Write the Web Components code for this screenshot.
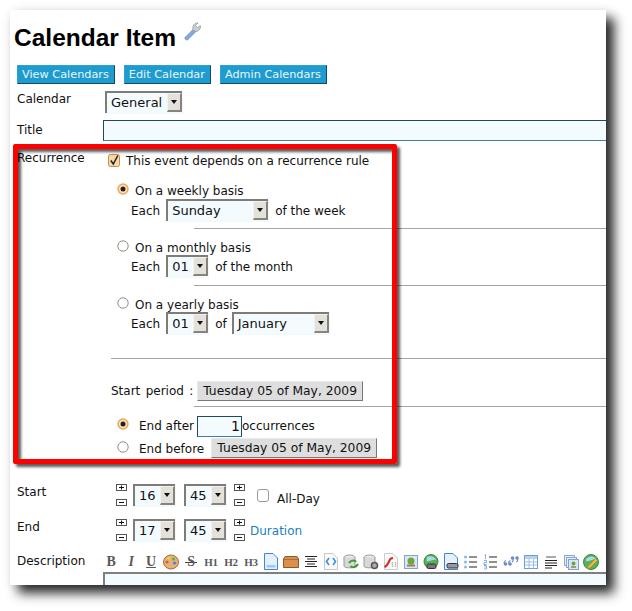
<!DOCTYPE html>
<html>
<head>
<meta charset="utf-8">
<title>Calendar Item</title>
<style>
  html, body { margin: 0; padding: 0; background: #fff; }
  body { width: 632px; height: 611px; overflow: hidden; font: 12px "DejaVu Sans", sans-serif; color: #111; }
  cal-row.calendar { margin-top: 7px; }
  cal-row.title { margin-top: 6px; --label-top: 3px; }
  cal-row.recurrence { margin-top: 10px; --label-top: 0; }
  cal-row.start { margin-top: 26px; }
  cal-row.end { margin-top: 12px; }
  cal-row.description { margin-top: 10px; --label-top: 2px; }
  .line { display: flex; align-items: center; white-space: nowrap; }
  .each { margin-left: 28px; }
  cal-option { margin-left: 14px; }
  cal-option.end-opt { --label-gap: 10px; }
</style>
</head>
<body>
<cal-sheet>
  <cal-heading>Calendar Item</cal-heading>
  <cal-nav>
    <cal-btn>View Calendars</cal-btn>
    <cal-btn>Edit Calendar</cal-btn>
    <cal-btn>Admin Calendars</cal-btn>
  </cal-nav>

  <cal-row class="calendar" label="Calendar">
    <cal-select value="General" width="78" style="margin-left:2px"></cal-select>
  </cal-row>
  <cal-row class="title" label="Title"><cal-input width="520"></cal-input></cal-row>

  <cal-row class="recurrence" label="Recurrence">
    <div class="line" style="height:18px;margin-left:5px">
      <cal-check checked style="margin-right:6px"></cal-check><span style="padding-top:2px">This event depends on a recurrence rule</span>
    </div>

    <cal-option checked style="margin-top:12px;height:18px">On a weekly basis</cal-option>
    <div class="line each">Each <cal-select value="Sunday" width="103" style="margin:0 6px 0 6px"></cal-select> of the week</div>
    <cal-rule inset="91" style="margin-top:6px"></cal-rule>

    <cal-option style="margin-top:9px;height:17px">On a monthly basis</cal-option>
    <div class="line each">Each <cal-select value="01" width="43" style="margin:0 6px 0 6px"></cal-select> of the month</div>
    <cal-rule inset="91" style="margin-top:7px"></cal-rule>

    <cal-option style="margin-top:9px;height:17px">On a yearly basis</cal-option>
    <div class="line each">Each <cal-select value="01" width="43" style="margin:0 6px 0 6px"></cal-select> of <cal-select value="January" width="98" style="margin-left:5px"></cal-select></div>
    <cal-rule inset="8" style="margin-top:23px"></cal-rule>

    <div class="line" style="margin:22px 0 0 8px"><span style="word-spacing:1.500px">Start period :</span><cal-date style="margin-left:4px">Tuesday 05 of May, 2009</cal-date></div>
    <cal-rule inset="91" style="margin-top:5px"></cal-rule>

    <cal-option class="end-opt" checked style="margin-top:8px;height:22px">End after<span style="display:flex;align-items:center;margin-left:3px"><cal-input width="45" value="1"></cal-input>occurrences</span></cal-option>
    <cal-option class="end-opt" style="margin-top:1px;height:20px"><span style="padding-top:1px">End before</span><cal-date style="margin-left:7px">Tuesday 05 of May, 2009</cal-date></cal-option>
  </cal-row>

  <cal-row class="start" label="Start">
    <div class="line" style="margin-left:13px">
      <cal-stepper></cal-stepper>
      <cal-select value="16" width="43" style="margin-left:6px"></cal-select>
      <cal-select value="45" width="43" style="margin-left:8px"></cal-select>
      <cal-stepper style="margin-left:7px"></cal-stepper>
      <cal-check style="margin-left:12px"></cal-check>
      <span style="margin-left:8px;padding-top:6px">All-Day</span>
    </div>
  </cal-row>
  <cal-row class="end" label="End">
    <div class="line" style="margin-left:13px">
      <cal-stepper></cal-stepper>
      <cal-select value="17" width="43" style="margin-left:6px"></cal-select>
      <cal-select value="45" width="43" style="margin-left:8px"></cal-select>
      <cal-stepper style="margin-left:7px"></cal-stepper>
      <span style="margin-left:5px;padding-top:1px;color:#1b7fbd">Duration</span>
    </div>
  </cal-row>
  <cal-row class="description" label="Description"><cal-toolbar></cal-toolbar></cal-row>
  <cal-editor></cal-editor>

  <cal-mark></cal-mark>
</cal-sheet>

<script>
/**
 * Registers a custom element whose shadow root is set from a string.
 *
 * @param {string} name - The tag name.
 * @param {string} html - The markup of the shadow root.
 * @param {Function} [ready] - Called with the element once connected.
 */
function define (name, html, ready) {
  customElements.define(name, class extends HTMLElement {
    constructor () {
      super()
      this.attachShadow({ mode: 'open' }).innerHTML = html
    }

    connectedCallback () {
      if (ready) ready(this, this.shadowRoot)
    }
  })
}

define('cal-sheet', `
  <style>
    :host { display: block; position: relative; width: 596px; height: 575px; margin: 10px 0 0 10px;
      background: #fff; box-shadow: 8px 8px 11px rgba(0,0,0,.85), 0 0 10px rgba(0,0,0,.06); }
    .clip { width: 596px; height: 575px; overflow: hidden; position: relative; }
  </style>
  <div class="clip"><slot></slot></div>`)

define('cal-heading', `
  <style>
    :host { display: flex; align-items: flex-start; height: 55px; padding-left: 4px; box-sizing: border-box; }
    h1 { font: bold 24.500px "Liberation Sans", sans-serif; color: #000; margin: 14px 0 0; }
    svg { margin: 12px 0 0 8px; }
  </style>
  <h1><slot></slot></h1>
  <svg width="17" height="19" viewBox="0 0 17 19">
    <path d="M1 15.500 9.500 7 12 9.500 3.500 18C2 18.500 .5 17 1 15.500Z" fill="#86a6e0" stroke="#6a8ccc" stroke-width=".7"/>
    <path d="M9 7.500C8 4 10.500 .5 14 1L11.500 3.500 13.500 5.500 16.500 3.500C17 7 14 10 11 9.500Z" fill="#c9ced4" stroke="#8f959c" stroke-width=".7"/>
  </svg>`)

define('cal-nav', `
  <style>
    :host { display: flex; gap: 9px; padding-left: 7px; height: 19px; }
  </style>
  <slot></slot>`)

define('cal-btn', `
  <style>
    :host { display: block; box-sizing: border-box; height: 19px; line-height: 17px; padding: 0 5px 0 4px; background: #1f9ccf; font-size: 11.280px;
      color: #e8f6fc; border: 1px solid #2aa4d6; border-right-color: #15486a; border-bottom-color: #15486a; }
  </style>
  <slot></slot>`)

define('cal-row', `
  <style>
    :host { display: grid; grid-template-columns: 86px 1fr; padding-left: 7px; }
    .label { padding-top: var(--label-top, 1px); line-height: 15px; }
  </style>
  <div class="label"></div>
  <div class="field"><slot></slot></div>`, (el, root) => {
  root.querySelector('.label').textContent = el.getAttribute('label')
})

define('cal-select', `
  <style>
    :host { display: inline-flex; box-sizing: border-box; height: 23px; flex: none; background: #f3f8fb; }
    .box { flex: 1; display: flex; justify-content: space-between; margin: 0 1px 1px 0; border: 2px solid #7f7b77; border-right: 0; border-bottom: 0; background: #f4fbff; box-sizing: border-box; }
    .value { font-size: 13px; line-height: 19px; padding-left: 4px; color: #111; }
    .arrow { width: 15px; height: 19px; margin-top: 0; background: #e4e0da; box-sizing: border-box; border: 1px solid #f4f2ee; border-right: 2px solid #86827c; border-bottom: 2px solid #86827c; position: relative; }
    .arrow::after { content: ""; position: absolute; left: 3px; top: 6px; border: 3.500px solid transparent; border-top: 4px solid #111; border-bottom: 0; }
  </style>
  <div class="box"><span class="value"></span><span class="arrow"></span></div>`, (el, root) => {
  root.querySelector('.value').textContent = el.getAttribute('value')
  el.style.width = el.getAttribute('width') + 'px'
})

define('cal-input', `
  <style>
    :host { display: block; box-sizing: border-box; height: 21px; flex: none; background: #f4fbff; border: 1px solid #1f4a5c; border-bottom-color: #3f7fa6;
      font-size: 14px; line-height: 19px; text-align: right; padding-right: 1px; }
  </style>
  <span></span>`, (el, root) => {
  root.querySelector('span').textContent = el.getAttribute('value') || ''
  el.style.width = el.getAttribute('width') + 'px'
})

define('cal-check', `
  <style>
    :host { display: block; flex: none; width: 12px; height: 13px; line-height: 0; }
  </style>
  <svg width="12" height="13" viewBox="0 0 12 13"></svg>`, (el, root) => {
  const svg = root.querySelector('svg')
  svg.innerHTML = el.hasAttribute('checked')
    ? '<rect x=".5" y=".5" width="11" height="12" rx="2" fill="#f5d9a8" stroke="#d0894a"/><path d="M2.800 6.500 5.300 10 9.800 1.500" fill="none" stroke="#222" stroke-width="1.500"/>'
    : '<rect x=".5" y=".5" width="11" height="12" rx="2.500" fill="#fff" stroke="#a09a92"/>'
})

const radioOn = '<circle cx="6" cy="6" r="5.700" fill="#eca858"/><circle cx="6" cy="6" r="4.200" fill="#f9e2c2"/><circle cx="6" cy="6" r="2.500" fill="#2a2118"/>'
const radioOff = '<circle cx="6" cy="6" r="5.200" fill="#fff" stroke="#968e84"/>'

define('cal-option', `
  <style>
    :host { display: flex; align-items: flex-start; white-space: nowrap; }
    .text { display: flex; align-items: center; margin-left: var(--label-gap, 6px); height: 100%; padding-top: 2px; box-sizing: border-box; }
    svg { display: block; flex: none; margin-top: 2px; }
    :host(.end-opt) .text { padding-top: 0; }
    :host(.end-opt) svg { margin-top: 3px; }
  </style>
  <svg width="12" height="12" viewBox="0 0 12 12"></svg><div class="text"><slot></slot></div>`, (el, root) => {
  root.querySelector('svg').innerHTML = el.hasAttribute('checked') ? radioOn : radioOff
})

define('cal-rule', `
  <style>
    :host { display: block; height: 1px; background: #a5a5a5; }
  </style>`, (el) => {
  el.style.marginLeft = el.getAttribute('inset') + 'px'
})

define('cal-date', `
  <style>
    :host { display: inline-block; box-sizing: border-box; height: 20px; line-height: 18px; padding: 0 5px; flex: none; background: #dedede;
      border: 1px solid #e9e9e9; border-right-color: #777; border-bottom-color: #777; color: #111; font-size: 12.300px; }
  </style>
  <slot></slot>`)

define('cal-stepper', `
  <style>
    :host { display: flex; flex-direction: column; justify-content: space-between; flex: none; width: 11px; height: 23px; }
    svg { display: block; }
  </style>
  <svg width="11" height="8"><rect x=".5" y=".5" width="10" height="6" fill="#fff" stroke="#555"/><path d="M3 3.500H8M5.500 1.500V5.500" stroke="#111"/></svg>
  <svg width="11" height="8"><rect x=".5" y=".5" width="10" height="6" fill="#fff" stroke="#555"/><path d="M3 3.500H8" stroke="#111"/></svg>`)

/* Toolbar icons: letters stay text, the rest are small drawings. */
const glyph = (t, style = '') => `<b style="${style}">${t}</b>`
const sheetPath = 'M1.500 .5H10L14.500 5V16.500H1.500Z'
const toolbarIcons = [
  glyph('B', 'font-size:14px'),
  glyph('I', 'font-style:italic;font-size:14px'),
  glyph('U', 'text-decoration:underline;font-size:14px'),
  '<svg viewBox="0 0 16 16"><ellipse cx="8" cy="8" rx="7.500" ry="7" fill="#e6b07a" stroke="#a56a3a"/><circle cx="6" cy="4" r="1.500" fill="#e8d040"/><circle cx="10.500" cy="5" r="1.500" fill="#5ab04a"/><circle cx="11.500" cy="9" r="1.500" fill="#4a80d0"/><circle cx="4" cy="8" r="1.500" fill="#d05a4a"/></svg>',
  glyph('S', 'display:block;width:12px;text-align:center;font-size:14px;background:linear-gradient(#444,#444) 0 55%/100% 1px no-repeat'),
  glyph('H1', 'font-size:11px'), glyph('H2', 'font-size:11px'), glyph('H3', 'font-size:11px'),
  `<svg viewBox="0 0 16 17" style="height:17px"><path d="${sheetPath}" fill="#e4f0fc" stroke="#3f86d8"/><path d="M3.500 12H12.500V14.500H3.500Z" fill="#9cc8f4"/></svg>`,
  '<svg viewBox="0 0 16 12" style="height:12px"><path d="M.5 3 2 .5H14L15.500 3V11.500H.5Z" fill="#dc8f4c" stroke="#8a5a28"/><path d="M1 3.500H15" stroke="#a8703a"/></svg>',
  '<svg viewBox="0 0 16 16"><path d="M2 2.500H14M4 5H12M2 7.500H14M4 10H12M2 12.500H14" stroke="#222"/></svg>',
  `<svg viewBox="0 0 16 17" style="height:17px"><path d="${sheetPath}" fill="#fafafa" stroke="#c8c8c8"/><path d="M6 5 3.500 8.500 6 12M10 5 12.500 8.500 10 12" fill="none" stroke="#3f8edc" stroke-width="1.600"/></svg>`,
  '<svg viewBox="0 0 16 16"><ellipse cx="6.500" cy="3.500" rx="5.500" ry="2.500" fill="#e8e8e8" stroke="#999"/><path d="M1 3.500V12C1 14.500 12 14.500 12 12V3.500" fill="#d8d8d8" stroke="#999"/><path d="M6 9C8 6 12 6 13 8M15 10C13 14 9 14 7.500 12" fill="none" stroke="#3a9a30" stroke-width="2"/></svg>',
  '<svg viewBox="0 0 16 16"><ellipse cx="6.500" cy="3.500" rx="5.500" ry="2.500" fill="#e8e8e8" stroke="#999"/><path d="M1 3.500V12C1 14.500 12 14.500 12 12V3.500" fill="#d8d8d8" stroke="#999"/><circle cx="11.500" cy="11.500" r="3" fill="#aaa" stroke="#555" stroke-width="1.500"/></svg>',
  `<svg viewBox="0 0 16 17" style="height:17px"><path d="${sheetPath}" fill="#fafafa" stroke="#ccc"/><path d="M1.500 14C4 13 5 11 6.500 7.500 7 6 8 5 10 5" fill="none" stroke="#d82a20" stroke-width="2"/><path d="M10 9C9 10 9 11 9.500 11.500 9 12 9 13 10 14M12 9C13 10 13 11 12.500 11.500 13 12 13 13 12 14" fill="none" stroke="#888" stroke-width=".7"/></svg>`,
  '<svg viewBox="0 0 16 16"><rect x="1.500" y="1.500" width="13" height="13" fill="#dbe6f4" stroke="#7fa5d4"/><circle cx="8" cy="7" r="3.500" fill="#6aa83a"/><path d="M4 11.500H12" stroke="#a07a40" stroke-width="2"/></svg>',
  '<svg viewBox="0 0 16 16"><circle cx="8" cy="7.500" r="7" fill="#5ab05a" stroke="#3a8a3a"/><path d="M4 3C7 1.500 12 2.500 13 6 10 5 6 8 3.500 7Z" fill="#a8d8f0"/><rect x="4" y="10" width="9" height="4.500" rx="1.500" fill="#777" stroke="#333"/></svg>',
  `<svg viewBox="0 0 16 17" style="height:17px"><path d="${sheetPath}" fill="#e4f0fc" stroke="#3f86d8"/><rect x="4" y="10.500" width="11" height="4.500" rx="1.500" fill="#999" stroke="#333"/></svg>`,
  '<svg viewBox="0 0 16 16"><path d="M6 3H14M6 8H14M6 13H14" stroke="#222" stroke-width="1.200"/><circle cx="2.500" cy="3" r="1.500" fill="#8ab4ea"/><circle cx="2.500" cy="8" r="1.500" fill="#8ab4ea"/><circle cx="2.500" cy="13" r="1.500" fill="#8ab4ea"/></svg>',
  '<svg viewBox="0 0 16 16"><path d="M6 3H14M6 8H14M6 13H14" stroke="#222" stroke-width="1.200"/><path d="M1.500 1 2.500 .5V5M1 6.500H3.500V8.500H1V10.500H3.500M1 11.500H3.500V15H1M1.500 13H3.500" fill="none" stroke="#6a9ce0" stroke-width=".8"/></svg>',
  '<svg viewBox="0 0 16 16"><path d="M3 6.500C1.500 7 1 8 1 9.500M7.500 6.500C6 7 5.500 8 5.500 9.500M10 4C10.500 6 10 7.500 8.800 8M14.500 4C15 6 14.500 7.500 13.300 8" fill="none" stroke="#6a8cc8" stroke-width="1.200"/><g fill="#6a8cc8"><circle cx="2.500" cy="10" r="1.800"/><circle cx="7" cy="10" r="1.800"/><circle cx="9.500" cy="4" r="1.800"/><circle cx="14" cy="4" r="1.800"/></g></svg>',
  '<svg viewBox="0 0 16 16"><rect x="1.500" y="1.500" width="13" height="13" fill="#fff" stroke="#6a9ce0"/><rect x="2" y="2" width="12" height="3" fill="#b8d0f0"/><path d="M2 8H14M2 11H14M6 5V14.500M10.500 5V14.500" stroke="#9cbce6"/></svg>',
  '<svg viewBox="0 0 16 16"><rect x="3" y="2" width="10" height="2" fill="#aaa"/><path d="M2 6.500H14M2 9H14M2 11.500H14M2 14H9" stroke="#222"/></svg>',
  '<svg viewBox="0 0 16 16"><rect x="1.500" y="1.500" width="10" height="10" fill="#e8eef8" stroke="#8aa8d4"/><rect x="3.500" y="3.500" width="10" height="10" fill="#e8eef8" stroke="#8aa8d4"/><rect x="5.500" y="5.500" width="10" height="10" fill="#dbe6f4" stroke="#7fa5d4"/><circle cx="10.500" cy="9.500" r="2" fill="#6aa83a"/><path d="M8 13H13" stroke="#a07a40" stroke-width="1.500"/></svg>',
  '<svg viewBox="0 0 16 16"><circle cx="8" cy="8" r="7.500" fill="#5ab05a" stroke="#3a8a3a"/><path d="M3 5C6 1.500 11 1.500 13 5 10 5 6 8 3 7Z" fill="#a8d8f0"/><path d="M5 12.500 12.500 4.500 14.500 6.500 7 14 4.500 14.500Z" fill="#f0c040" stroke="#b0802a" stroke-width=".7"/></svg>'
]

define('cal-toolbar', `
  <style>
    :host { display: flex; margin-left: -2px; height: 19px; align-items: center; }
    .cell { width: 20px; height: 17px; flex: none; display: flex; align-items: center; justify-content: center; color: #5a5a5a;
      font-family: "Liberation Serif", serif; overflow: visible; }
    svg { width: 16px; height: 16px; display: block; flex: none; }
    b { font-weight: bold; letter-spacing: -.3px; }
  </style>
  ${toolbarIcons.map(icon => `<span class="cell">${icon}</span>`).join('')}`)

define('cal-editor', `
  <style>
    :host { display: block; box-sizing: border-box; margin: 1px 0 0 93px; height: 40px; background: #f4fbff; border: 2px solid #7f7f7f; border-right: 0; }
  </style>`)

define('cal-mark', `
  <style>
    :host { position: absolute; left: 3px; top: 134px; width: 384px; height: 320px; box-sizing: border-box; pointer-events: none;
      border: 5px solid #f00; border-radius: 2px;
      box-shadow: 3px 3px 3px rgba(0,0,0,.65), inset 3px 3px 3px rgba(0,0,0,.65); }
  </style>`)
</script>
</body>
</html>
